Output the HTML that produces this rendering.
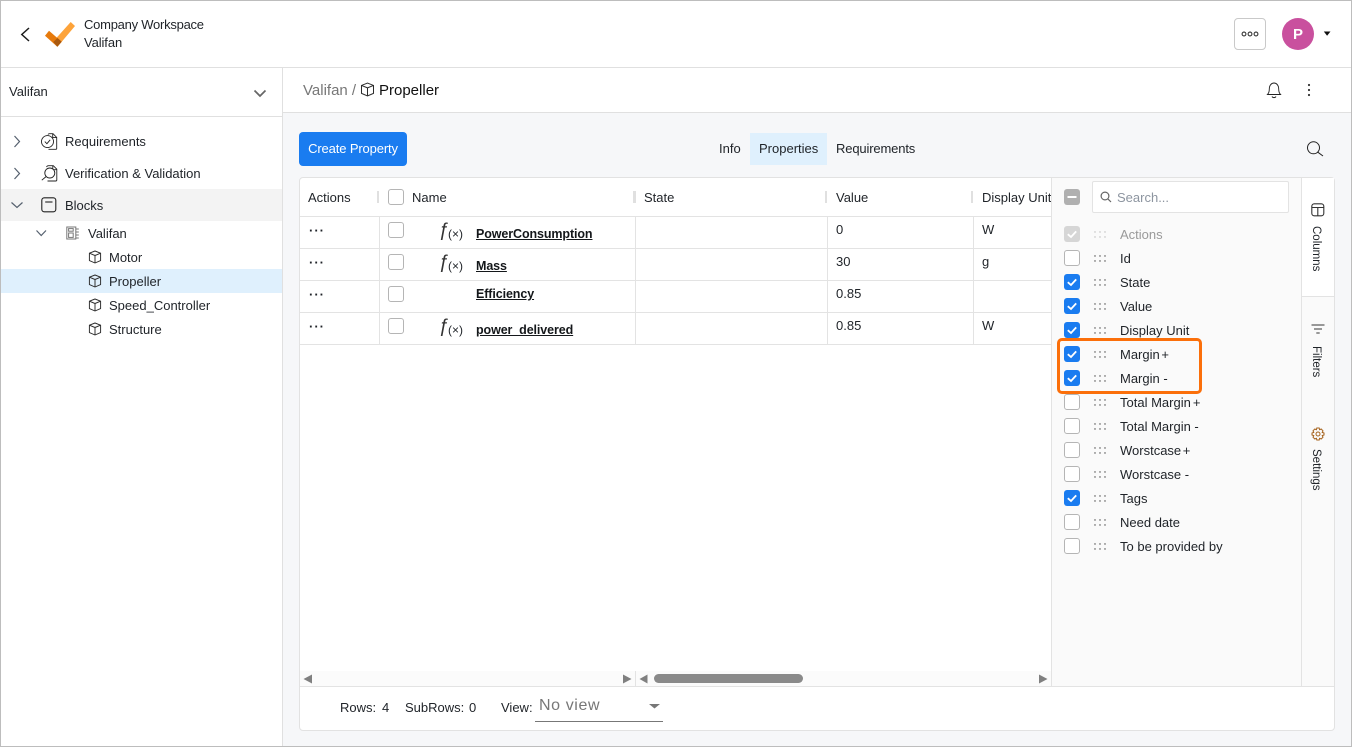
<!DOCTYPE html>
<html><head><meta charset="utf-8">
<style>
html,body{margin:0;padding:0;width:1352px;height:747px;overflow:hidden;background:#fff}
body{position:relative;font-family:"Liberation Sans",sans-serif;font-size:13px;color:#1f2328}
.b{position:absolute}
.t{position:absolute;white-space:nowrap;line-height:16px;letter-spacing:0}
.cb{position:absolute;width:14px;height:14px;border:1px solid #b5b5b5;border-radius:3px;background:#fff}
.on{position:absolute;width:16px;height:16px;border-radius:3px;background:#1a7cf0}
.on svg,.dis svg{position:absolute;left:0;top:0}
.dis{position:absolute;width:16px;height:16px;border-radius:3px;background:#d6d6d6}
.link{font-weight:bold;font-size:12.5px;text-decoration:underline;color:#14171a;letter-spacing:-.1px}
.dots{font-weight:bold;letter-spacing:1px}
.fn{font-size:19px;line-height:18px;font-weight:normal;color:#333}
.fx{font-size:12px}
.vt{writing-mode:vertical-rl;font-size:11.5px}
.ws{word-spacing:-2px}
svg{position:absolute;overflow:visible}
</style></head><body>

<!-- backgrounds -->
<div class="b" style="left:283px;top:113px;width:1069px;height:634px;background:#f6f7f9"></div>
<div class="b" style="left:1px;top:67px;width:1350px;height:1px;background:#e0e0e0"></div>
<div class="b" style="left:282px;top:68px;width:1px;height:679px;background:#e0e0e0"></div>
<div class="b" style="left:1px;top:116px;width:281px;height:1px;background:#e0e0e0"></div>
<div class="b" style="left:283px;top:112px;width:1069px;height:1px;background:#e0e0e0"></div>

<!-- header -->
<svg style="left:0;top:0" width="100" height="60" fill="none">
<path d="M29 28 L21.8 34.5 L29 41" stroke="#1c1c1c" stroke-width="1.5"/>
<path d="M70.7 22 L75 26 L57.5 46.7 L53 41.7 Z" fill="#fda33a"/>
<path d="M45 35.7 L49 30.7 L61.7 41.7 L57.3 46.7 Z" fill="#e67a0c"/>
<path d="M53.3 42 L57.5 38 L61.7 41.7 L57.3 46.7 Z" fill="#a9590f"/>
</svg>
<div class="t" style="left:84px;top:17px;letter-spacing:-.25px">Company Workspace</div>
<div class="t" style="left:84px;top:35px;letter-spacing:-.1px">Valifan</div>

<div class="b" style="left:1234px;top:18px;width:30px;height:30px;border:1px solid #c9c9c9;border-radius:4px"></div>
<svg style="left:1234px;top:18px" width="32" height="32" fill="none" stroke="#333" stroke-width="1.1">
<circle cx="10" cy="16" r="1.9"/><circle cx="16" cy="16" r="1.9"/><circle cx="22" cy="16" r="1.9"/>
</svg>
<div class="b" style="left:1282px;top:18px;width:32px;height:32px;border-radius:50%;background:#c9509e;color:#fff;font-weight:bold;font-size:15px;line-height:33px;text-align:center">P</div>
<svg style="left:1323px;top:30px" width="10" height="8"><path d="M.8 1.5H7.5L4.1 5.8Z" fill="#111"/></svg>

<!-- sidebar -->
<div class="t" style="left:9px;top:84px">Valifan</div>
<svg style="left:252px;top:88px" width="16" height="12" fill="none"><path d="M2.5 2.5 L8 8 L13.5 2.5" stroke="#666" stroke-width="1.7"/></svg>

<svg style="left:10px;top:134px" width="14" height="14" fill="none"><path d="M4.5 2 L9.5 7.5 L4.5 13" stroke="#55606e" stroke-width="1.2"/></svg>
<svg style="left:10px;top:166px" width="14" height="14" fill="none"><path d="M4.5 2 L9.5 7.5 L4.5 13" stroke="#55606e" stroke-width="1.2"/></svg>
<div class="b" style="left:1px;top:189px;width:281px;height:32px;background:#f3f3f3"></div>
<svg style="left:10px;top:198px" width="14" height="14" fill="none"><path d="M1.5 4.5 L7 9.5 L12.5 4.5" stroke="#55606e" stroke-width="1.2"/></svg>

<svg style="left:40px;top:133px" width="18" height="18" fill="none" stroke="#222" stroke-width=".9">
<path d="M8 1.5 C8.3 1 8.7 .7 9.5 .7 H13 L16.7 4.4 V15.5 C16.7 16 16.3 16.3 15.8 16.3 H8.5"/><path d="M12.7 .7 V4.6 H16.7"/>
<circle cx="7.5" cy="8.6" r="6" fill="#fff"/><path d="M4.8 8.6 L6.9 10.7 L10.2 6.8"/>
</svg>
<div class="t" style="left:65px;top:134px">Requirements</div>
<svg style="left:41px;top:165px" width="18" height="18" fill="none" stroke="#222" stroke-width=".9">
<path d="M5.5 2 C6 1 6.5 .7 7.5 .7 H12.3 L15.8 4.2 V15 C15.8 15.6 15.3 16 14.7 16 H6.5"/><path d="M11.8 .7 V4.7 H15.8"/>
<circle cx="8.8" cy="8" r="5" fill="#fff"/><path d="M5.2 11.5 L.8 15.2"/>
</svg>
<div class="t" style="left:65px;top:166px">Verification &amp; Validation</div>
<svg style="left:41px;top:197px" width="16" height="16" fill="none" stroke="#222" stroke-width="1.1">
<rect x=".8" y=".8" width="14" height="14" rx="2.5"/><path d="M4.2 5 H11.5"/>
</svg>
<div class="t" style="left:65px;top:198px">Blocks</div>

<svg style="left:35px;top:226px" width="14" height="14" fill="none"><path d="M1.5 4.5 L6.2 9.5 L11 4.5" stroke="#55606e" stroke-width="1.2"/></svg>
<svg style="left:66px;top:226px" width="14" height="14" fill="none" stroke="#777" stroke-width="1">
<rect x=".8" y="1" width="9" height="12"/><rect x="2.6" y="7" width="4.6" height="4.4"/><rect x="2.6" y="2.6" width="4.6" height="2.6"/><path d="M10 3H12.8M10 6H12.8M10 9H12.8M10 12H12.8"/>
</svg>
<div class="t" style="left:88px;top:226px">Valifan</div>

<div class="b" style="left:1px;top:269px;width:281px;height:24px;background:#dff0fd"></div>
<svg width="0" height="0" style="left:0;top:0"><defs>
<symbol id="cube" viewBox="0 0 14 14"><g fill="none" stroke="#2b2b2b" stroke-width=".95" stroke-linejoin="round"><path d="M7 1 L12.6 3.2 V10.6 L7 13 L1.4 10.6 V3.2 Z"/><path d="M1.4 3.2 L7 5.5 L12.6 3.2 M7 5.5 V13"/></g></symbol>
</defs></svg>
<svg style="left:88px;top:250px" width="14" height="14"><use href="#cube"/></svg>
<div class="t" style="left:109px;top:250px">Motor</div>
<svg style="left:88px;top:274px" width="14" height="14"><use href="#cube"/></svg>
<div class="t" style="left:109px;top:274px">Propeller</div>
<svg style="left:88px;top:298px" width="14" height="14"><use href="#cube"/></svg>
<div class="t" style="left:109px;top:298px">Speed_Controller</div>
<svg style="left:88px;top:322px" width="14" height="14"><use href="#cube"/></svg>
<div class="t" style="left:109px;top:322px">Structure</div>

<!-- breadcrumb -->
<div class="t" style="left:303px;top:83px;font-size:15px;color:#777">Valifan /</div>
<svg style="left:360px;top:82px" width="15" height="15"><use href="#cube"/></svg>
<div class="t" style="left:379px;top:83px;font-size:15px;color:#111">Propeller</div>
<svg style="left:1264px;top:80px" width="20" height="20" fill="none" stroke="#222" stroke-width=".9">
<path d="M3.5 14.5 C5 13 5.3 11.5 5.3 9 C5.3 5.5 7.3 3 10 3 C12.7 3 14.7 5.5 14.7 9 C14.7 11.5 15 13 16.5 14.5 Z"/><path d="M8 16.5 C8.7 18 11.3 18 12 16.5"/>
</svg>
<svg style="left:1304px;top:82px" width="10" height="16" fill="#333"><circle cx="5" cy="3" r="1.1"/><circle cx="5" cy="8" r="1.1"/><circle cx="5" cy="13" r="1.1"/></svg>

<!-- toolbar -->
<div class="b" style="left:299px;top:132px;width:108px;height:34px;border-radius:4px;background:#1a7cf0;color:#fff;text-align:center;line-height:34px;letter-spacing:-.13px">Create Property</div>
<div class="t" style="left:719px;top:141px">Info</div>
<div class="b" style="left:750px;top:133px;width:77px;height:32px;background:#dff0fd"></div>
<div class="t" style="left:759px;top:141px">Properties</div>
<div class="t" style="left:836px;top:141px;letter-spacing:-.15px">Requirements</div>
<svg style="left:1305px;top:139px" width="20" height="20" fill="none" stroke="#222" stroke-width="1"><circle cx="8.5" cy="8.8" r="6"/><path d="M12.8 13.2 L18 17"/></svg>

<!-- card -->
<div class="b" style="left:299px;top:177px;width:1034px;height:552px;background:#fff;border:1px solid #e2e2e2;border-radius:4px"></div>
<!-- table lines -->
<div class="b" style="left:300px;top:216px;width:751px;height:1px;background:#e3e3e3"></div>
<div class="b" style="left:300px;top:248px;width:751px;height:1px;background:#e3e3e3"></div>
<div class="b" style="left:300px;top:280px;width:751px;height:1px;background:#e3e3e3"></div>
<div class="b" style="left:300px;top:312px;width:751px;height:1px;background:#e3e3e3"></div>
<div class="b" style="left:300px;top:344px;width:751px;height:1px;background:#e3e3e3"></div>
<div class="b" style="left:379px;top:217px;width:1px;height:127px;background:#e3e3e3"></div>
<div class="b" style="left:635px;top:217px;width:1px;height:127px;background:#e3e3e3"></div>
<div class="b" style="left:827px;top:217px;width:1px;height:127px;background:#e3e3e3"></div>
<div class="b" style="left:973px;top:217px;width:1px;height:127px;background:#e3e3e3"></div>
<div class="b" style="left:377px;top:191px;width:2px;height:12px;background:#e0e0e0"></div>
<div class="b" style="left:633px;top:191px;width:3px;height:12px;background:#e0e0e0"></div>
<div class="b" style="left:825px;top:191px;width:2px;height:12px;background:#e0e0e0"></div>
<div class="b" style="left:971px;top:191px;width:2px;height:12px;background:#e0e0e0"></div>

<div class="t" style="left:308px;top:190px">Actions</div>
<div class="cb" style="left:388px;top:189px"></div>
<div class="t" style="left:412px;top:190px">Name</div>
<div class="t" style="left:644px;top:190px">State</div>
<div class="t" style="left:836px;top:190px">Value</div>
<div class="t" style="left:982px;top:190px">Display Unit</div>

<!-- rows -->
<div class="t dots" style="left:309px;top:223px">···</div>
<div class="t dots" style="left:309px;top:255px">···</div>
<div class="t dots" style="left:309px;top:287px">···</div>
<div class="t dots" style="left:309px;top:319px">···</div>
<div class="cb" style="left:388px;top:222px"></div>
<div class="cb" style="left:388px;top:254px"></div>
<div class="cb" style="left:388px;top:286px"></div>
<div class="cb" style="left:388px;top:318px"></div>

<div class="t fn" style="left:439px;top:222px">ƒ</div>
<div class="t fx" style="left:448px;top:226px">(×)</div>
<div class="t fn" style="left:439px;top:254px">ƒ</div>
<div class="t fx" style="left:448px;top:258px">(×)</div>
<div class="t fn" style="left:439px;top:318px">ƒ</div>
<div class="t fx" style="left:448px;top:322px">(×)</div>

<div class="t link" style="left:476px;top:226px">PowerConsumption</div>
<div class="t link" style="left:476px;top:258px">Mass</div>
<div class="t link" style="left:476px;top:286px">Efficiency</div>
<div class="t link" style="left:476px;top:322px">power_delivered</div>

<div class="t" style="left:836px;top:222px">0</div>
<div class="t" style="left:836px;top:254px">30</div>
<div class="t" style="left:836px;top:286px">0.85</div>
<div class="t" style="left:836px;top:318px">0.85</div>
<div class="t" style="left:982px;top:222px">W</div>
<div class="t" style="left:982px;top:254px">g</div>
<div class="t" style="left:982px;top:318px">W</div>

<!-- scrollbars -->
<div class="b" style="left:300px;top:671px;width:751px;height:15px;background:#fbfbfb"></div>
<div class="b" style="left:300px;top:686px;width:1034px;height:1px;background:#e3e3e3"></div>
<div class="b" style="left:635px;top:671px;width:1px;height:15px;background:#e3e3e3"></div>
<svg style="left:300px;top:671px" width="751" height="15" fill="#808080">
<path d="M3.5 8 L12 3.5 V12.5Z"/><path d="M323 3.5 L331.5 8 L323 12.5Z"/>
<path d="M339.5 8 L347.5 3.5 V12.5Z"/><path d="M739 3.5 L747.5 8 L739 12.5Z"/>
<rect x="354" y="3" width="149" height="9" rx="4.5" fill="#8a8a8a"/>
</svg>

<!-- footer -->
<div class="t" style="left:340px;top:700px">Rows:</div>
<div class="t" style="left:382px;top:700px">4</div>
<div class="t" style="left:405px;top:700px">SubRows:</div>
<div class="t" style="left:469px;top:700px">0</div>
<div class="t" style="left:501px;top:700px">View:</div>
<div class="t" style="left:539px;top:698px;font-size:16px;color:#777;letter-spacing:.6px">No view</div>
<svg style="left:648px;top:702px" width="14" height="8"><path d="M1 2H12L6.5 6.5Z" fill="#777"/></svg>
<div class="b" style="left:535px;top:721px;width:128px;height:1px;background:#777"></div>

<!-- side panel -->
<div class="b" style="left:1051px;top:178px;width:250px;height:508px;background:#fafafa;border-left:1px solid #e3e3e3;box-sizing:border-box"></div>
<div class="b" style="left:1301px;top:178px;width:33px;height:508px;background:#fafafa;border-left:1px solid #e3e3e3;box-sizing:border-box"></div>
<div class="b" style="left:1302px;top:178px;width:32px;height:118px;background:#fff;border-bottom:1px solid #e3e3e3"></div>

<div class="dis" style="left:1064px;top:189px;background:#b0b0b0"><svg width="16" height="16"><path d="M3.5 8H12.5" stroke="#fff" stroke-width="2"/></svg></div>
<div class="b" style="left:1092px;top:181px;width:195px;height:30px;background:#fff;border:1px solid #e3e3e3;border-radius:2px"></div>
<svg style="left:1100px;top:191px" width="14" height="14" fill="none" stroke="#666" stroke-width="1.2"><circle cx="5" cy="5" r="3.9"/><path d="M7.9 7.9 L11 11"/></svg>
<div class="t" style="left:1117px;top:190px;color:#8d95a0">Search...</div>

<div class="dis" style="left:1064px;top:226px"><svg width="16" height="16" fill="none"><path d="M3.8 8.2 L7 11 L12.2 5.4" stroke="#fff" stroke-width="1.8"/></svg></div>
<div class="cb" style="left:1064px;top:250px"></div>
<div class="on" style="left:1064px;top:274px"><svg width="16" height="16" fill="none"><path d="M3.8 8.2 L7 11 L12.2 5.4" stroke="#fff" stroke-width="1.8"/></svg></div>
<div class="on" style="left:1064px;top:298px"><svg width="16" height="16" fill="none"><path d="M3.8 8.2 L7 11 L12.2 5.4" stroke="#fff" stroke-width="1.8"/></svg></div>
<div class="on" style="left:1064px;top:322px"><svg width="16" height="16" fill="none"><path d="M3.8 8.2 L7 11 L12.2 5.4" stroke="#fff" stroke-width="1.8"/></svg></div>
<div class="on" style="left:1064px;top:346px"><svg width="16" height="16" fill="none"><path d="M3.8 8.2 L7 11 L12.2 5.4" stroke="#fff" stroke-width="1.8"/></svg></div>
<div class="on" style="left:1064px;top:370px"><svg width="16" height="16" fill="none"><path d="M3.8 8.2 L7 11 L12.2 5.4" stroke="#fff" stroke-width="1.8"/></svg></div>
<div class="cb" style="left:1064px;top:394px"></div>
<div class="cb" style="left:1064px;top:418px"></div>
<div class="cb" style="left:1064px;top:442px"></div>
<div class="cb" style="left:1064px;top:466px"></div>
<div class="on" style="left:1064px;top:490px"><svg width="16" height="16" fill="none"><path d="M3.8 8.2 L7 11 L12.2 5.4" stroke="#fff" stroke-width="1.8"/></svg></div>
<div class="cb" style="left:1064px;top:514px"></div>
<div class="cb" style="left:1064px;top:538px"></div>

<svg style="left:1094px;top:226px" width="12" height="324" fill="#444">
<g fill="#bbb"><circle cx="1" cy="6" r=".7"/><circle cx="6" cy="6" r=".7"/><circle cx="11" cy="6" r=".7"/><circle cx="1" cy="11" r=".7"/><circle cx="6" cy="11" r=".7"/><circle cx="11" cy="11" r=".7"/></g>
<g id="d1"><circle cx="1" cy="30" r=".7"/><circle cx="6" cy="30" r=".7"/><circle cx="11" cy="30" r=".7"/><circle cx="1" cy="35" r=".7"/><circle cx="6" cy="35" r=".7"/><circle cx="11" cy="35" r=".7"/></g>
<use href="#d1" y="24"/><use href="#d1" y="48"/><use href="#d1" y="72"/><use href="#d1" y="96"/><use href="#d1" y="120"/><use href="#d1" y="144"/><use href="#d1" y="168"/><use href="#d1" y="192"/><use href="#d1" y="216"/><use href="#d1" y="240"/><use href="#d1" y="264"/><use href="#d1" y="288"/>
</svg>

<div class="t" style="left:1120px;top:227px;color:#9a9a9a">Actions</div>
<div class="t" style="left:1120px;top:251px">Id</div>
<div class="t" style="left:1120px;top:275px">State</div>
<div class="t" style="left:1120px;top:299px">Value</div>
<div class="t" style="left:1120px;top:323px">Display Unit</div>
<div class="t ws" style="left:1120px;top:347px">Margin +</div>
<div class="t" style="left:1120px;top:371px">Margin -</div>
<div class="t" style="left:1120px;top:395px"><span style="letter-spacing:0">Total Margin</span><span style="margin-left:2px">+</span></div>
<div class="t" style="left:1120px;top:419px">Total Margin -</div>
<div class="t ws" style="left:1120px;top:443px">Worstcase +</div>
<div class="t" style="left:1120px;top:467px">Worstcase -</div>
<div class="t" style="left:1120px;top:491px">Tags</div>
<div class="t" style="left:1120px;top:515px">Need date</div>
<div class="t" style="left:1120px;top:539px">To be provided by</div>

<div class="b" style="left:1057px;top:338px;width:139px;height:50px;border:3px solid #fb6f0a;border-radius:5px"></div>

<!-- vertical tabs -->
<svg style="left:1311px;top:203px" width="14" height="14" fill="none" stroke="#333" stroke-width="1.1"><rect x=".8" y=".8" width="12" height="12" rx="2.5"/><path d="M.8 4.5H12.8M6.8 4.5V12.8"/></svg>
<div class="t vt" style="left:1308px;top:226px">Columns</div>
<svg style="left:1311px;top:324px" width="14" height="12" fill="none" stroke="#777" stroke-width="1.5"><path d="M.5 1H13.5M3 5H11M5.3 9H8.7"/></svg>
<div class="t vt" style="left:1308px;top:346px">Filters</div>
<svg style="left:1311px;top:427px" width="14" height="14" fill="none" stroke="#a5621c" stroke-width="1"><circle cx="7" cy="7" r="2"/><path d="M5.8 1 H8.2 L8.6 2.7 L10.2 2 L12 3.8 L11.2 5.4 L13 6 V8 L11.2 8.6 L12 10.2 L10.2 12 L8.6 11.3 L8.2 13 H5.8 L5.4 11.3 L3.8 12 L2 10.2 L2.8 8.6 L1 8 V6 L2.8 5.4 L2 3.8 L3.8 2 L5.4 2.7 Z"/></svg>
<div class="t vt" style="left:1308px;top:449px">Settings</div>

<!-- outer frame -->
<div class="b" style="left:0;top:0;width:1350px;height:745px;border:1px solid #bdbdbd"></div>
</body></html>
